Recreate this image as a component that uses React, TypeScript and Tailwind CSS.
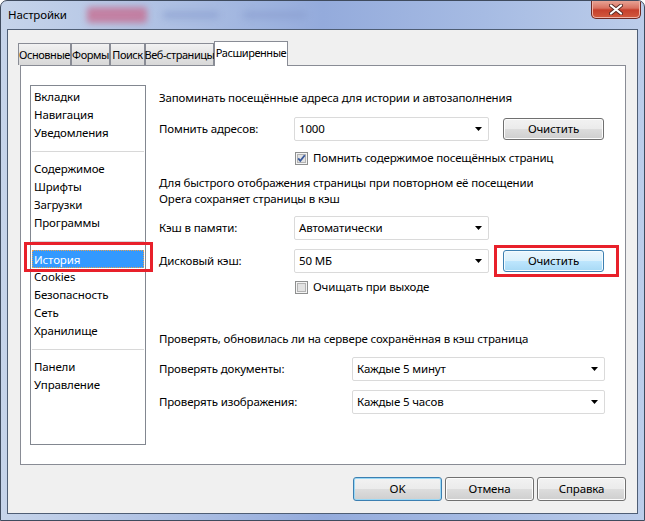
import React from "react";

const listGroups = [
  ["Вкладки", "Навигация", "Уведомления"],
  ["Содержимое", "Шрифты", "Загрузки", "Программы"],
  ["История", "Cookies", "Безопасность", "Сеть", "Хранилище"],
  ["Панели", "Управление"],
];

const tabs = [
  { label: "Основные", w: "w-[53px]" },
  { label: "Формы", w: "w-[39px]" },
  { label: "Поиск", w: "w-[35px]" },
  { label: "Веб-страницы", w: "w-[69px]" },
];

function Arrow() {
  return (
    <svg width="7" height="4" viewBox="0 0 7 4" className="shrink-0">
      <path d="M0 0H7L3.5 4Z" fill="#000" />
    </svg>
  );
}

function Select({ value, w }: { value: string; w: string }) {
  return (
    <div
      className={`${w} h-[24px] flex items-center justify-between pl-[4px] pr-[6px] bg-white border border-[#dadada] rounded-[2px]`}
    >
      <span>{value}</span>
      <Arrow />
    </div>
  );
}

function Button({ label, hot, def, w }: { label: string; hot?: boolean; def?: boolean; w: string }) {
  const skin = hot
    ? "border-[#3c7fb1] bg-[linear-gradient(#eaf6fd_0%,#d9f0fc_49%,#bee6fd_50%,#a7d9f5_100%)] shadow-[inset_0_0_0_1px_#f4fbfe]"
    : def
      ? "border-[#3c7fb1] bg-[linear-gradient(#f2f2f2_0%,#ebebeb_49%,#dddddd_50%,#cfcfcf_100%)] shadow-[inset_0_0_0_1px_#9ad8f5]"
      : "border-[#707070] bg-[linear-gradient(#f2f2f2_0%,#ebebeb_49%,#dddddd_50%,#cfcfcf_100%)] shadow-[inset_0_0_0_1px_#fcfcfc]";
  return (
    <div className={`${w} flex items-center justify-center border rounded-[3px] ${skin}`}>
      {label}
    </div>
  );
}

function Checkbox({ checked }: { checked?: boolean }) {
  return (
    <svg width="13" height="13" viewBox="0 0 13 13" className="shrink-0">
      <rect x="0.5" y="0.5" width="12" height="12" fill="#f4f4f4" stroke="#8e8f8f" />
      <rect x="2.5" y="2.5" width="8" height="8" fill="#e2e2e2" stroke="#b3b3b3" />
      {checked && (
        <path d="M3.2 6.4L5.3 8.8L9.8 3.2" fill="none" stroke="#3a5a9c" strokeWidth="1.8" />
      )}
    </svg>
  );
}

export default function App() {
  return (
    <div className="w-[645px] h-[521px] flex flex-col px-[6px] pb-[6px] border border-[#3f4b5e] rounded-t-[7px] bg-[linear-gradient(90deg,#c6d4ea_0%,#aabde2_30%,#94abdc_50%,#a6bbe3_75%,#bccdea_100%)] font-['Noto_Sans',sans-serif] text-[11.5px] tracking-[-0.15px] leading-[16px] text-black overflow-hidden whitespace-nowrap">
      {/* заголовок окна */}
      <div className="h-[28px] flex items-center">
        <span className="pl-[1px]">Настройки</span>
        <div className="ml-[20px] w-[60px] h-[16px] rounded-[3px] bg-[#c66f92] blur-[3px] opacity-80" />
        <div className="ml-[16px] w-[56px] h-[8px] rounded bg-[#8b9fd0] blur-[3px] opacity-60" />
        <div className="ml-[24px] w-[64px] h-[8px] rounded bg-[#8b9fd0] blur-[3px] opacity-60" />
        <div className="ml-auto -mr-[3px] self-start w-[50px] h-[19px] -mt-px flex items-center justify-center rounded-b-[5px] border border-t-0 border-[#6e2a24] bg-[linear-gradient(#e9a99b_0%,#d87261_45%,#c6402c_55%,#d25a3e_100%)] shadow-[inset_0_0_0_1px_#f0b3a6]">
          <svg width="14" height="11" viewBox="0 0 14 11">
            <path d="M2 1.5L12 9.5M12 1.5L2 9.5" stroke="#5a2a24" strokeWidth="4" strokeLinecap="round" />
            <path d="M2 1.5L12 9.5M12 1.5L2 9.5" stroke="#fff" strokeWidth="2.2" strokeLinecap="round" />
          </svg>
        </div>
      </div>

      {/* клиентская область */}
      <div className="flex-1 flex flex-col border border-[#4f5e75] bg-[#f0f0f0]">
        <div className="mt-[11px] pl-[10px] h-[24px] flex items-end">
          {tabs.map((t) => (
            <div
              key={t.label}
              className={`${t.w} h-[22px] flex items-center justify-center border border-b-0 border-[#898c95] bg-[linear-gradient(#f2f2f2,#e4e4e4_50%,#d8d8d8)] text-[11px] tracking-[-0.45px]`}
            >
              {t.label}
            </div>
          ))}
          <div className="relative z-10 w-[74px] h-[25px] -mb-px flex items-center justify-center border border-b-0 border-[#898c95] bg-white pb-[2px] text-[11px] tracking-[-0.45px]">
            Расширенные
          </div>
        </div>

        <div className="ml-[12px] mr-[11px] h-[400px] border border-[#898c95] bg-white flex">
          {/* список разделов */}
          <div className="ml-[9px] mt-[19px] w-[116px] h-[360px] border border-[#828790] pt-[2px] leading-[18px]">
            {listGroups.map((g, gi) => (
              <div key={gi}>
                {gi > 0 && (
                  <div className="h-[18px] flex items-center px-[1px]">
                    <div className="w-full border-t border-[#d8d8d8]" />
                  </div>
                )}
                {g.map((item) =>
                  item === "История" ? (
                    <div key={item} className="relative mx-[1px] h-[18px]">
                      <div className="h-full px-[1px] bg-[#3399ff] text-white border border-dotted border-[#e8a050]">
                        {item}
                      </div>
                      <div className="absolute -left-[8px] -right-[9px] -top-[8px] -bottom-[4px] border-[3px] border-[#e8202a]" />
                    </div>
                  ) : (
                    <div key={item} className="h-[18px] px-[3px]">
                      {item}
                    </div>
                  ),
                )}
              </div>
            ))}
          </div>

          {/* настройки */}
          <div className="ml-[13px] pt-[24px] flex flex-col">
            <div>Запоминать посещённые адреса для истории и автозаполнения</div>

            <div className="mt-[11px] h-[24px] flex items-center">
              <div className="w-[135px]">Помнить адресов:</div>
              <Select value="1000" w="w-[195px]" />
              <div className="ml-[14px] h-[22px] flex">
                <Button label="Очистить" w="w-[101px]" />
              </div>
            </div>

            <div className="mt-[9px] h-[16px] flex items-center pl-[136px] gap-[5px]">
              <Checkbox checked />
              <span>Помнить содержимое посещённых страниц</span>
            </div>

            <div className="mt-[9px]">
              Для быстрого отображения страницы при повторном её посещении
              <br />
              Opera сохраняет страницы в кэш
            </div>

            <div className="mt-[9px] h-[24px] flex items-center">
              <div className="w-[135px]">Кэш в памяти:</div>
              <Select value="Автоматически" w="w-[195px]" />
            </div>

            <div className="mt-[9px] h-[24px] flex items-center">
              <div className="w-[135px]">Дисковый кэш:</div>
              <Select value="50 МБ" w="w-[195px]" />
              <div className="relative ml-[14px] h-[22px] flex">
                <Button label="Очистить" hot w="w-[101px]" />
                <div className="absolute -left-[9px] -right-[15px] -top-[5px] -bottom-[5px] border-[3px] border-[#e8202a]" />
              </div>
            </div>

            <div className="mt-[6px] h-[16px] flex items-center pl-[136px] gap-[5px]">
              <Checkbox />
              <span>Очищать при выходе</span>
            </div>

            <div className="mt-[36px]">Проверять, обновилась ли на сервере сохранённая в кэш страница</div>

            <div className="mt-[10px] h-[24px] flex items-center">
              <div className="w-[193px]">Проверять документы:</div>
              <Select value="Каждые 5 минут" w="w-[253px]" />
            </div>

            <div className="mt-[9px] h-[24px] flex items-center">
              <div className="w-[193px]">Проверять изображения:</div>
              <Select value="Каждые 5 часов" w="w-[253px]" />
            </div>
          </div>
        </div>

        <div className="mt-[12px] h-[24px] flex justify-end gap-[3px] mr-[11px]">
          <Button label="OK" def w="w-[89px]" />
          <Button label="Отмена" w="w-[89px]" />
          <Button label="Справка" w="w-[89px]" />
        </div>
      </div>
    </div>
  );
}
